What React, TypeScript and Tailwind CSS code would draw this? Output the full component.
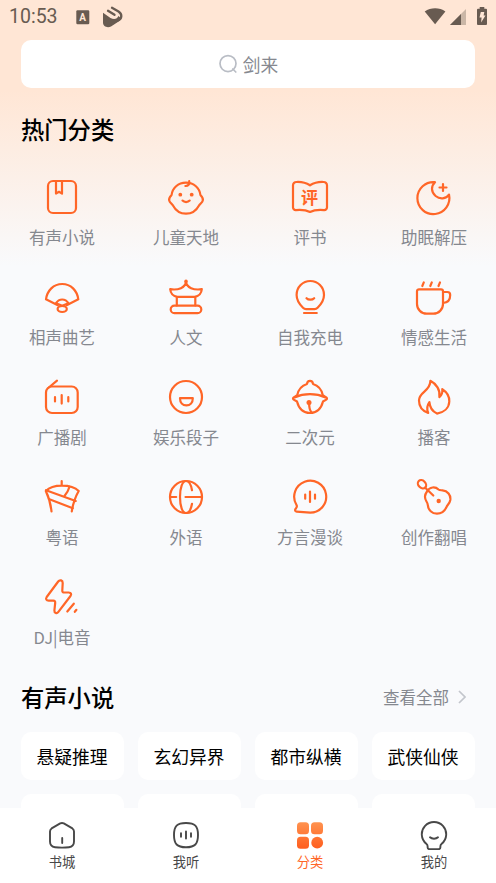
import type { ReactNode } from "react";

type Category = { name: string; icon: ReactNode };

const categories: Category[] = [
  {
    name: "有声小说",
    icon: (
      <>
        <rect x="6" y="4" width="28" height="32" rx="5" />
        <path d="M14 4v12.6l3-1.8 3 1.8V4" />
      </>
    )
  },
  {
    name: "儿童天地",
    icon: (
      <>
        <path d="M20 5.7C12 5.7 6.4 11 5.6 18 3.6 20 2.7 21.8 3.2 23.5 3.8 25.6 5.5 26.4 6.8 28.2 9.5 33.2 14.3 36.7 20 36.7S30.5 33.2 33.2 28.2C34.5 26.4 36.2 25.6 36.8 23.5 37.3 21.8 36.4 20 34.4 18 33.6 11 28 5.7 20 5.7Z" />
        <path d="M23.2 4.2c.6 3-1 5-3.8 4.8M16.5 23.6c1.8 1.9 5.4 1.9 7.2 0" />
        <circle cx="14.3" cy="17.7" r="1.9" fill="currentColor" stroke="none" />
        <circle cx="25.7" cy="17.7" r="1.9" fill="currentColor" stroke="none" />
      </>
    )
  },
  {
    name: "评书",
    icon: (
      <>
        <path d="M20 8.3C16 5.8 12 4.7 6.5 5A3.3 3.3 0 0 0 3 8.3v22.2A2.7 2.7 0 0 0 5.9 33.1C11 32.7 15 32.4 20 35c5-2.6 9-2.3 14.1-1.9A2.7 2.7 0 0 0 37 30.5V8.3A3.3 3.3 0 0 0 33.5 5C28 4.7 24 5.8 20 8.3Z" />
        <text x="19.5" y="27.2" textAnchor="middle" fontSize="17" fontWeight="700" fill="currentColor" stroke="none">
          评
        </text>
      </>
    )
  },
  {
    name: "助眠解压",
    icon: (
      <>
        <path d="M21 5.2A16 16 0 1 0 35 17.6C32 22 26 22.6 21.6 19 16.8 15 17 9 21 5.2Z" />
        <path d="M29 7v7M25.5 10.5h7" />
      </>
    )
  },
  {
    name: "相声曲艺",
    icon: (
      <>
        <path d="M15.8 28.2 4 22.3C5.2 13.5 11.5 7 20.2 7s14.9 6.5 16.1 15.3L24.6 28.2" />
        <path d="M14 26.2c1.6-2.6 3.6-3.7 6.2-3.7s4.6 1.1 6.2 3.7l-6.2 2.6z" />
        <ellipse cx="20.2" cy="32" rx="4.6" ry="3" />
      </>
    )
  },
  {
    name: "人文",
    icon: (
      <>
        <circle cx="20" cy="4.4" r="1.8" fill="currentColor" stroke="none" />
        <path d="M20 5c-.8 5.5-7.5 8.5-15.8 7.2C4.5 16 7 19.5 11.5 19.8h17c4.5-.3 7-3.8 7.3-7.6C27.5 13.5 20.8 10.5 20 5Z" />
        <path d="M10.8 20v8.5M29.3 20v8.5" />
        <rect x="4.7" y="28.7" width="30.6" height="7.4" rx="3.7" />
      </>
    )
  },
  {
    name: "自我充电",
    icon: (
      <>
        <path d="M16 32.2c-1.3 0-2-.4-3-1.4C9.2 27 6.6 23.5 6.6 18a13.7 14 0 0 1 27.4 0c0 5.5-2.6 9-6.4 12.8-1 1-1.7 1.4-3 1.4Z" />
        <path d="M14 36h12.8M16.5 21.2c1.9 2 5.8 2 7.7 0" />
      </>
    )
  },
  {
    name: "情感生活",
    icon: (
      <>
        <path d="M5 12.3h22a2 2 0 0 1 2 2V27a9.7 9.7 0 0 1-9.7 9.7h-6.600A9.7 9.7 0 0 1 3 27V14.3a2 2 0 0 1 2-2Z" />
        <path d="M29 15h4.4c1.9 0 2.8 1 2.8 3 0 4.5-2.2 7.7-7.2 8M8.3 9l1.5-3.6M16.3 9l1.5-3.6M24.5 9L26 5.4" />
      </>
    )
  },
  {
    name: "广播剧",
    icon: (
      <>
        <rect x="4" y="9.5" width="31.7" height="26.5" rx="6" />
        <path d="M6.8 10.5 15 3.7M13 20.2v4.2M19.7 18v8.6M26.3 20.2v4.2" />
      </>
    )
  },
  {
    name: "娱乐段子",
    icon: (
      <>
        <circle cx="20" cy="20" r="16" />
        <path d="M14 21.2h12.8c0 4.5-2.6 7.2-6.4 7.2S14 25.7 14 21.2Z" />
      </>
    )
  },
  {
    name: "二次元",
    icon: (
      <>
        <path d="M7.2 18.2C8.5 12 12 8.5 17 7c.2-2 1.2-3.2 3-3.2S22.8 5 23 7c5 1.5 8.5 5 9.8 11.2l3.7 2.4c.8.7.6 1.5-.2 2L33 24.5C31.2 31.5 26.5 36 20 36S8.8 31.5 7 24.5l-3.3-1.9c-.8-.5-1-1.3-.2-2Z" />
        <path d="M4.5 20.4c9.5-4.3 21.5-4.3 31 0M19.2 25.4c-.2 4 .2 7.5 2.3 10" />
        <circle cx="19" cy="25.4" r="2.5" fill="currentColor" stroke="none" />
      </>
    )
  },
  {
    name: "播客",
    icon: (
      <path d="M16.4 3.8c5.8 3 10.2 9.2 9 16.4 2.4-1.8 3.2-4.6 2.9-8C33.5 15.5 35.5 20 35.3 24.5 35 31 30 35.5 23 36.6c-4.3-2-7.2-5.8-7.6-11.4-2.4 3.3-2.9 7-1.2 10.8C8.5 34 5 29.5 5 23.6 5 14.5 16.5 14.5 16.4 3.8Z" />
    )
  },
  {
    name: "粤语",
    icon: (
      <>
        <path d="M19.7 4v4.5M9.5 34.4C8.7 27 7 20.5 3.8 14c3.7-3.7 9.2-5.3 16-5.3s13.2 1.6 16.9 5.3c-3.7 6.5-5.8 13-6.9 20.4" />
        <path d="M4 13.2 33.7 24M6.8 22l24 9.2M27.5 9.8c-1 3.6-2.7 6.7-5.2 9.4" />
      </>
    )
  },
  {
    name: "外语",
    icon: (
      <>
        <circle cx="20" cy="20" r="16" />
        <path d="M26 13.2C25 7.5 22.8 4 20 4c-3.5 0-6 6.5-6 16s2.5 16 6 16c2.8 0 5-3.5 6-9.2M4 20h6.2M19.5 20H36" />
      </>
    )
  },
  {
    name: "方言漫谈",
    icon: (
      <>
        <path d="M20.2 35.7a16 16 0 1 0-13.8-7.9c.9 1.5.6 2.4-.4 3.5-1.3 1.4-1.3 3.3.6 3.4Z" />
        <path d="M15.2 17.5v4.2M20 14.5v10.4M25 17.5v4.2" />
      </>
    )
  },
  {
    name: "创作翻唱",
    icon: (
      <>
        <ellipse cx="8" cy="7.3" rx="4.6" ry="3.6" transform="rotate(45 8 7.3)" />
        <path d="M11.2 10.7 19.3 18.5" />
        <path d="M13 14.5C15.5 9.5 21.5 9.5 24.5 12.5c1.2 1 2.3.6 4 .8C33.5 13.8 37 18 36.3 23c-.6 3.5-2.8 4.5-3.8 7C30.5 34.5 27 36.7 23 36.7c-5 0-8.8-3.7-9.2-8.7C13.6 24.5 10.8 24 11 19.5c.1-2 .9-3.5 2-5Z" />
        <circle cx="24.7" cy="24" r="2.2" fill="currentColor" stroke="none" />
      </>
    )
  },
  {
    name: "DJ|电音",
    icon: (
      <>
        <path d="M16.2 4.5 4.7 20c-1.3 2-.4 3.7 2 3.7h4.6c1.5 0 2 .8 1.9 2.1l-.8 7.7c-.2 2.7 2.5 3.4 4 1.4L28.5 19c1.3-1.9.5-3.5-1.8-3.5h-4.4c-1.5 0-2.1-.7-2-2l.4-7.5c.1-2.7-2.9-3.7-4.5-1.5Z" />
        <path d="M25.3 34.5 31.8 26.7M32.8 34.8l1.6-2" />
      </>
    )
  }
];

const chips = ["悬疑推理", "玄幻异界", "都市纵横", "武侠仙侠"];

const tabs = [
  {
    name: "书城",
    icon: (
      <>
        <path d="M12.2 2.4a4 4 0 0 1 3.6 0l8.6 5A3.8 3.8 0 0 1 26 10.5V20.5c0 3.5-1.8 5.3-5 5.7-4.6.5-9.4.5-14 0-3.2-.4-5-2.2-5-5.7V10.5A3.8 3.8 0 0 1 3.6 7.4Z" />
        <path d="M14.2 17v5" />
      </>
    )
  },
  {
    name: "我听",
    icon: (
      <>
        <path d="M14 2C5 2 2 5 2 14s3 12.3 12 12.3S26 23 26 14 23 2 14 2Z" />
        <path d="M9 12.3v3.4M14 10.5v7M19 12.3v3.4" />
      </>
    )
  },
  {
    name: "分类",
    active: true,
    icon: (
      <>
        <defs>
          <linearGradient id="tab" x1="0" y1="1" x2="0" y2="27" gradientUnits="userSpaceOnUse">
            <stop offset="0" stopColor="#ff9350" />
            <stop offset="1" stopColor="#ff5f1f" />
          </linearGradient>
        </defs>
        <g fill="url(#tab)" stroke="none">
          <rect x="1" y="1.3" width="12" height="12" rx="3.5" />
          <rect x="15" y="1.3" width="12" height="12" rx="3.5" />
          <rect x="1" y="15.7" width="12" height="12" rx="3.5" />
          <circle cx="21.2" cy="21.7" r="5.9" />
        </g>
      </>
    )
  },
  {
    name: "我的",
    icon: (
      <>
        <path d="M7.6 25.2c0-1-.3-1.7-1.3-2.5a12.2 12.2 0 1 1 15.4 0c-1 .8-1.3 1.5-1.3 2.5v1a2 2 0 0 1-2 2H9.6a2 2 0 0 1-2-2Z" />
        <path d="M10 16.3c2 1.9 6 1.900 8 0" />
      </>
    )
  }
];

function StatusBar() {
  return (
    <div className="flex h-10 items-center pl-[9px] pr-[9px] pb-[6px] text-[#685b51]">
      <span className="font-[Roboto] text-[19.5px] leading-none">10:53</span>
      <svg viewBox="0 0 14 15" className="ml-[18px] h-[15px] w-[14px] shrink-0">
        <rect x=".3" y=".3" width="13" height="14" rx="1.2" fill="currentColor" />
        <text x="6.600" y="10.8" textAnchor="middle" fontSize="10" fontWeight="700" fill="#ffe6d5" fontFamily="Roboto">
          A
        </text>
      </svg>
      <svg viewBox="0 0 22 22" className="ml-[12px] h-[22px] w-[22px] shrink-0" fill="none" strokeLinecap="round">
        <path
          d="M1 6.8 8.5 12C12 14 15.500 13 16.300 10L19.500 12.500C18.500 14.500 17 15.400 15.500 16.300L9 20.4C5.5 22.3 1 20.5 1 16.5Z"
          fill="currentColor"
        />
        <path d="M10 1.8 16.5 5.500C20.500 8 20 12.500 16.500 14.200" stroke="currentColor" strokeWidth="2.3" />
        <path d="M6 4.800 12.500 8.800" stroke="currentColor" strokeWidth="2.3" />
      </svg>
      <svg viewBox="0 0 64 20" className="ml-auto h-5 w-16 shrink-0" fill="currentColor">
        <path d="M1.7 4.5C7.8.2 16.5.2 22.4 4.5L12.1 17.2Z" />
        <path d="M43 2v16H27Z" opacity=".35" />
        <path d="M38 7v11H27Z" />
        <path d="M56.7 0h4.6v1.8H63a1 1 0 0 1 1 1V17a1 1 0 0 1-1 1h-8a1 1 0 0 1-1-1V2.8a1 1 0 0 1 1-1h1.7Z" />
        <path d="M57.8 5h3.5l-.7 3.5h1.9l-4.4 7 .5-5h-2.100Z" fill="#ffe6d5" />
      </svg>
    </div>
  );
}

export default function App() {
  return (
    <div
      lang="zh-CN"
      className="flex h-[883px] w-[496px] flex-col overflow-hidden bg-[#f9fafc] bg-[linear-gradient(180deg,#ffe6d5_0px,#ffe6d5_90px,#f9fafc_266px)] font-['Noto_Sans_CJK_SC',sans-serif]"
    >
      <StatusBar />

      <div className="mx-[21px] flex h-12 shrink-0 items-center justify-center rounded-[10px] bg-white text-[17.7px] text-[#85888f]">
        <svg viewBox="0 0 20 20" className="mr-[5px] h-5 w-5" fill="none" stroke="#b9bdc5" strokeWidth="1.7">
          <circle cx="10" cy="9.6" r="8" />
          <path d="m14.8 15 3 3" strokeLinecap="round" />
        </svg>
        <span>剑来</span>
      </div>

      <h2 className="ml-[21px] mt-[23px] h-9 shrink-0 text-[23.3px] font-medium leading-9 text-black">热门分类</h2>

      <div className="mt-[30px] grid shrink-0 grid-cols-4">
        {categories.map((c) => (
          <div key={c.name} className="flex h-[99.9px] flex-col items-center">
            <svg
              viewBox="0 0 40 40"
              className="h-10 w-10 text-[#ff6627]"
              fill="none"
              stroke="currentColor"
              strokeWidth="2.2"
              strokeLinecap="round"
              strokeLinejoin="round"
            >
              {c.icon}
            </svg>
            <span className="mt-2 text-[16.5px] leading-6 text-[#85888f]">{c.name}</span>
          </div>
        ))}
      </div>

      <div className="mt-[2.5px] flex h-9 shrink-0 items-center justify-between pl-[21px] pr-[30px]">
        <h2 className="text-[23.3px] font-medium leading-9 text-black">有声小说</h2>
        <div className="flex items-center text-[16.5px] text-[#85888f]">
          查看全部
          <svg viewBox="0 0 8 14" className="ml-[9px] h-[14px] w-2" fill="none" stroke="#c3c6cc" strokeWidth="1.7">
            <path d="m1 1 6 6-6 6" />
          </svg>
        </div>
      </div>

      <div className="mx-[21px] mt-[17px] grid min-h-0 flex-1 auto-rows-[48px] grid-cols-4 gap-[14px] overflow-hidden">
        {chips.map((name) => (
          <div key={name} className="flex items-center justify-center rounded-[10px] bg-white pr-px text-[17.8px] text-black">
            {name}
          </div>
        ))}
        {chips.map((name) => (
          <div key={name + "-next"} className="rounded-[10px] bg-white" />
        ))}
      </div>

      <nav className="grid h-[75px] shrink-0 grid-cols-4 bg-white pt-[13px]">
        {tabs.map((t) => (
          <div key={t.name} className={t.active ? "flex flex-col items-center text-[#ff6627]" : "flex flex-col items-center text-[#484848]"}>
            <svg
              viewBox="0 0 28 29"
              className="h-[29px] w-7"
              fill="none"
              stroke="currentColor"
              strokeWidth="1.9"
              strokeLinecap="round"
              strokeLinejoin="round"
            >
              {t.icon}
            </svg>
            <span className="mt-[2px] text-[13.3px] leading-5">{t.name}</span>
          </div>
        ))}
      </nav>
    </div>
  );
}
